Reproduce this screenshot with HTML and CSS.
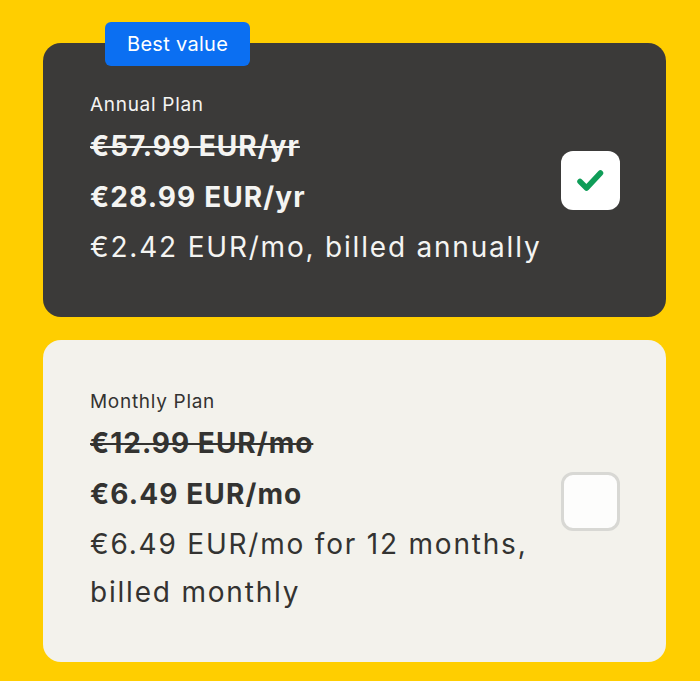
FILE: index.html
```html
<!DOCTYPE html>
<html lang="en">
  <head>
    <meta charset="UTF-8" />
    <meta name="viewport" content="width=device-width, initial-scale=1.0" />
    <title>Plans</title>
    <link rel="stylesheet" href="styles.css">
  </head>
  <body>
    <div class="plans">
      <label class="plan plan-selected">
        <span class="badge">Best value</span>
        <div class="plan-info">
          <div class="plan-name">Annual Plan</div>
          <div class="plan-old">€57.99 EUR/yr</div>
          <div class="plan-price">€28.99 EUR/yr</div>
          <div class="plan-note">€2.42 EUR/mo, billed annually</div>
        </div>
        <span class="check">
          <svg width="30" height="30" viewBox="0 0 30 30">
            <path d="M4 16.5 L10.5 23 L24.5 8" fill="none" stroke="#0f9d58" stroke-width="5.5" stroke-linecap="round" stroke-linejoin="round" />
          </svg>
        </span>
      </label>

      <label class="plan">
        <div class="plan-info">
          <div class="plan-name">Monthly Plan</div>
          <div class="plan-old">€12.99 EUR/mo</div>
          <div class="plan-price">€6.49 EUR/mo</div>
          <div class="plan-note">€6.49 EUR/mo for 12 months,<br>billed monthly</div>
        </div>
        <span class="check check-empty"></span>
      </label>
    </div>
  </body>
</html>
```

FILE: styles.css
```css
body {
  margin: 0;
  padding: 43px 34px 0 43px;
  background-color: #ffce00;
  font-family: Inter, "Open Sans", sans-serif;
  height: 681px;
  box-sizing: border-box;
  overflow: hidden;
}
.plans {
  display: flex;
  flex-direction: column;
  gap: 23px;
}
.plan {
  position: relative;
  display: flex;
  align-items: center;
  justify-content: space-between;
  padding: 46px 46px 46px 47px;
  border-radius: 18px;
  background: #f3f2ec;
  color: #333331;
}
.plan-selected {
  background: #3b3a39;
  color: #f4f4f2;
}
.badge {
  position: absolute;
  top: -21px;
  left: 62px;
  height: 44px;
  padding: 0 22px;
  display: flex;
  align-items: center;
  background: #0b6ff2;
  color: white;
  font-size: 20px;
  letter-spacing: 0.3px;
  border-radius: 6px;
}
.plan-name {
  font-size: 19px;
  letter-spacing: 0.7px;
  line-height: 32px;
}
.plan-old {
  font-size: 28px;
  font-weight: bold;
  letter-spacing: 1px;
  line-height: 50px;
  text-decoration: line-through;
}
.plan-price {
  font-size: 28px;
  font-weight: bold;
  letter-spacing: 1.1px;
  line-height: 52px;
}
.plan-note {
  font-size: 28px;
  letter-spacing: 1.8px;
  line-height: 48px;
}
.check {
  width: 59px;
  height: 59px;
  box-sizing: border-box;
  border-radius: 12px;
  background: #fff;
  display: flex;
  align-items: center;
  justify-content: center;
  flex-shrink: 0;
}
.check-empty {
  border: 3px solid #d8d8d4;
  background: #fdfdfc;
}
```
